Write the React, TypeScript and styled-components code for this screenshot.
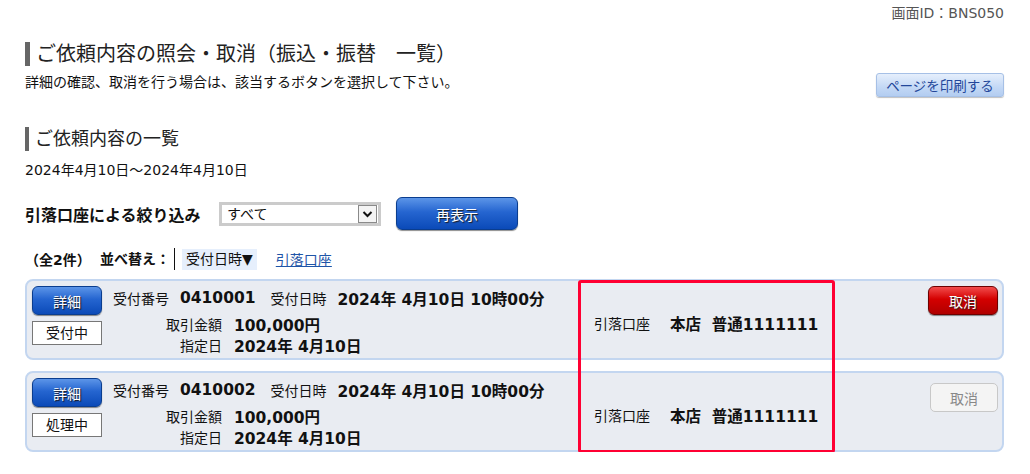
import React from "react";
import styled, { createGlobalStyle, css } from "styled-components";

const GlobalStyle = createGlobalStyle`
  body {
    margin: 0;
    background: #fff;
    font-family: "DejaVu Sans", "Noto Sans CJK JP", sans-serif;
    color: #111;
  }
`;

const Page = styled.div`
  width: 1030px;
  padding: 5px 26px 0 25px;
  box-sizing: border-box;
`;

const ScreenId = styled.div`
  text-align: right;
  font-size: 14px;
  line-height: 16px;
  color: #555;
`;

const PageTitle = styled.h1`
  margin: 21px 0 0;
  border-left: 5px solid #666;
  padding-left: 6px;
  font-size: 20px;
  font-weight: normal;
  line-height: 24px;
  color: #222;
`;

const GuideRow = styled.div`
  margin-top: 7px;
  display: flex;
  justify-content: space-between;
  align-items: flex-start;
`;

const Guide = styled.p`
  margin: 1px 0 0;
  font-size: 14px;
  line-height: 16px;
`;

const PrintButton = styled.button`
  width: 128px;
  height: 24px;
  border: 1px solid #a6c0e6;
  border-radius: 3px;
  background: linear-gradient(#e6effc, #c3d8f5 60%, #b3cdf1);
  box-shadow: 0 1px 1px rgba(0, 0, 0, 0.25);
  color: #23479a;
  font-family: inherit;
  font-size: 13.5px;
  padding: 0;
`;

const SectionTitle = styled.h2`
  margin: 30px 0 0;
  border-left: 4px solid #666;
  padding-left: 6px;
  font-size: 18px;
  font-weight: normal;
  line-height: 24px;
  color: #222;
`;

const Period = styled.div`
  margin-top: 10px;
  font-size: 14px;
  line-height: 18px;
`;

const FilterRow = styled.div`
  margin-top: 18px;
  display: flex;
  align-items: center;
  height: 33px;
`;

const FilterLabel = styled.span`
  font-size: 16px;
  font-weight: bold;
  width: 194px;
`;

const SelectFrame = styled.div`
  display: flex;
  align-items: center;
  width: 162px;
  height: 24px;
  box-sizing: border-box;
  border: 3px solid #cbcbcb;
  background: #fff;
  margin-top: 1px;
`;

const Select = styled.select`
  flex: 1;
  appearance: none;
  border: none;
  outline: none;
  background: transparent;
  font-family: inherit;
  font-size: 14px;
  padding: 0 0 0 5px;
  color: #111;
`;

const ArrowBox = styled.span`
  width: 17px;
  height: 16px;
  margin-right: 1px;
  border: 1px solid #8a8a8a;
  background: #f4f4f4;
  display: flex;
  align-items: center;
  justify-content: center;
`;

const blueButton = css`
  border: 1px solid #0a3d8f;
  border-radius: 6px;
  background: linear-gradient(#5c95e8, #2565d0 45%, #0b4ab8);
  box-shadow: 0 1px 1px rgba(0, 0, 0, 0.45);
  color: #fff;
  font-family: inherit;
  text-shadow: 1px 1px 1px #1a1a1a;
  padding: 0;
`;

const RefreshButton = styled.button`
  ${blueButton}
  margin-left: 15px;
  width: 122px;
  height: 33px;
  font-size: 14px;
`;

const SortRow = styled.div`
  margin-top: 18px;
  display: flex;
  align-items: center;
  height: 22px;
  font-size: 14px;
`;

const Count = styled.span`
  font-weight: bold;
  width: 75px;
`;

const SortLabel = styled.span`
  font-weight: bold;
  padding-right: 4px;
  border-right: 1px solid #111;
  height: 22px;
  line-height: 22px;
`;

const SortCurrent = styled.span`
  margin-left: 7px;
  padding: 0 4px;
  background: #e6effc;
  line-height: 21px;
`;

const SortLink = styled.a`
  margin-left: 19px;
  color: #1f55a8;
  text-decoration: underline;
`;

const CardList = styled.div`
  position: relative;
  margin-top: 9px;
  display: flex;
  flex-direction: column;
  gap: 11px;
`;

const Card = styled.div`
  height: 81px;
  box-sizing: border-box;
  border: 2px solid #c3d6f0;
  border-radius: 8px;
  background: #e9ecf2;
  padding: 5px 4px 0 5px;
  display: flex;
  align-items: flex-start;
`;

const Side = styled.div`
  width: 70px;
  display: flex;
  flex-direction: column;
  gap: 6px;
`;

const DetailButton = styled.button`
  ${blueButton}
  width: 70px;
  height: 29px;
  font-size: 14px;
`;

const Status = styled.div`
  height: 24px;
  box-sizing: border-box;
  border: 1px solid #777;
  background: #fff;
  font-size: 14px;
  line-height: 22px;
  text-align: center;
`;

const Info = styled.div`
  width: 481px;
  margin: 1px 0 0 11px;
`;

const Line = styled.div<{ $h: number; $top?: number }>`
  display: flex;
  align-items: center;
  height: ${(p) => p.$h}px;
  margin-top: ${(p) => p.$top || 0}px;
`;

const Label = styled.span<{ $w?: number; $left?: number }>`
  font-size: 14px;
  margin-left: ${(p) => p.$left || 0}px;
  ${(p) => p.$w && `width: ${p.$w}px; text-align: right;`}
`;

const Value = styled.span<{ $gap: number }>`
  margin-left: ${(p) => p.$gap}px;
  font-size: 15.5px;
  font-weight: bold;
`;

const Account = styled.div`
  flex: 1;
  padding-top: 26px;
  display: flex;
  align-items: center;
  height: 22px;
`;

const Cancel = styled.button<{ $disabled?: boolean }>`
  width: 70px;
  height: 29px;
  font-family: inherit;
  font-size: 14px;
  padding: 0;
  ${(p) =>
    p.$disabled
      ? css`
          margin-top: 5px;
          width: 68px;
          border: 1px solid #c8c8c8;
          border-radius: 5px;
          background: #f4f4f4;
          color: #888;
        `
      : css`
          border: 1px solid #6e0000;
          border-radius: 6px;
          background: linear-gradient(#f24c4c, #d40000 45%, #b00000);
          box-shadow: 0 1px 1px rgba(0, 0, 0, 0.45);
          color: #fff;
          text-shadow: 1px 1px 1px #222;
        `}
`;

const Highlight = styled.div`
  position: absolute;
  left: 553px;
  top: 1px;
  width: 257px;
  height: 173px;
  box-sizing: border-box;
  border: 3px solid #ff0033;
  border-radius: 3px;
  pointer-events: none;
`;

type Request = {
  no: string;
  status: string;
  cancellable: boolean;
};

const requests: Request[] = [
  { no: "0410001", status: "受付中", cancellable: true },
  { no: "0410002", status: "処理中", cancellable: false },
];

export default function App() {
  return (
    <>
      <GlobalStyle />
      <Page>
        <ScreenId>画面ID：BNS050</ScreenId>
        <PageTitle>ご依頼内容の照会・取消（振込・振替　一覧）</PageTitle>
        <GuideRow>
          <Guide>詳細の確認、取消を行う場合は、該当するボタンを選択して下さい。</Guide>
          <PrintButton>ページを印刷する</PrintButton>
        </GuideRow>

        <SectionTitle>ご依頼内容の一覧</SectionTitle>
        <Period>2024年4月10日～2024年4月10日</Period>

        <FilterRow>
          <FilterLabel>引落口座による絞り込み</FilterLabel>
          <SelectFrame>
            <Select defaultValue="all">
              <option value="all">すべて</option>
            </Select>
            <ArrowBox>
              <svg width="11" height="8" viewBox="0 0 11 8">
                <path d="M1.5 2 L5.5 6 L9.5 2" fill="none" stroke="#111" strokeWidth="2" />
              </svg>
            </ArrowBox>
          </SelectFrame>
          <RefreshButton>再表示</RefreshButton>
        </FilterRow>

        <SortRow>
          <Count>（全2件）</Count>
          <SortLabel>並べ替え：</SortLabel>
          <SortCurrent>受付日時▼</SortCurrent>
          <SortLink href="#">引落口座</SortLink>
        </SortRow>

        <CardList>
          {requests.map((r) => (
            <Card key={r.no}>
              <Side>
                <DetailButton>詳細</DetailButton>
                <Status>{r.status}</Status>
              </Side>
              <Info>
                <Line $h={22}>
                  <Label>受付番号</Label>
                  <Value $gap={11}>{r.no}</Value>
                  <Label $left={15}>受付日時</Label>
                  <Value $gap={11}>2024年 4月10日 10時00分</Value>
                </Line>
                <Line $h={22} $top={4}>
                  <Label $w={109}>取引金額</Label>
                  <Value $gap={12}>100,000円</Value>
                </Line>
                <Line $h={20}>
                  <Label $w={109}>指定日</Label>
                  <Value $gap={12}>2024年 4月10日</Value>
                </Line>
              </Info>
              <Account>
                <Label>引落口座</Label>
                <Value $gap={20}>本店&nbsp;&nbsp;普通1111111</Value>
              </Account>
              <Cancel $disabled={!r.cancellable}>取消</Cancel>
            </Card>
          ))}
          <Highlight />
        </CardList>
      </Page>
    </>
  );
}
